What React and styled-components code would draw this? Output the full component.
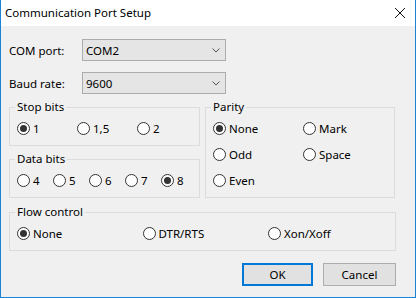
import React from "react";
import styled, { createGlobalStyle } from "styled-components";

const Global = createGlobalStyle`
  html, body { margin: 0; padding: 0; background: #f0f0f0; }
  body { font-family: "Noto Sans", "Segoe UI", sans-serif; font-size: 11.5px; color: #000; }
  * { box-sizing: border-box; }
`;

const Window = styled.div`
  width: 416px;
  height: 298px;
  display: flex;
  flex-direction: column;
  background: #f0f0f0;
  border: 1px solid #1883d7;
  border-top: none;
`;

const TitleBar = styled.div`
  height: 26px;
  background: #fff;
  display: flex;
  align-items: center;
  justify-content: space-between;
  padding: 0 10px 0 4px;
  font-size: 11.5px;
`;

const Title = styled.span`
  line-height: 16px;
`;

const Body = styled.div`
  flex: 1;
  display: flex;
  flex-direction: column;
  padding: 13px 19px 0 8px;
`;

const FieldRow = styled.div`
  display: flex;
  align-items: center;
  height: 22px;
  margin-bottom: ${(p) => p.$mb || 0}px;
`;

const FieldLabel = styled.label`
  width: 73px;
`;

const Combo = styled.div`
  width: 144px;
  height: 22px;
  background: #e5e5e5;
  border: 1px solid #acacac;
  display: flex;
  align-items: center;
  justify-content: space-between;
  padding: 0 5px 0 3px;
`;

const Group = styled.div`
  position: relative;
  border: 1px solid #dcdcdc;
  height: ${(p) => p.$h}px;
  padding: 12px 0 0 7px;
`;

const Legend = styled.span`
  position: absolute;
  top: -9px;
  left: 5px;
  padding: 0 2px;
  background: #f0f0f0;
  line-height: 16px;
`;

const GroupsRow = styled.div`
  display: grid;
  grid-template-columns: 191px 190px;
  column-gap: 5px;
  margin-top: 13px;
`;

const Column = styled.div`
  display: flex;
  flex-direction: column;
  gap: 13px;
`;

const Options = styled.div`
  display: grid;
  grid-template-columns: repeat(${(p) => p.$cols}, ${(p) => p.$w}px);
  row-gap: 10px;
`;

const RadioItem = styled.label`
  display: flex;
  align-items: center;
  height: 16px;
  gap: 3px;
  white-space: nowrap;
`;

const Circle = styled.span`
  width: 13px;
  height: 13px;
  border-radius: 50%;
  border: 1px solid #333;
  background: #fff;
  display: flex;
  align-items: center;
  justify-content: center;
  &::after {
    content: "";
    width: 7px;
    height: 7px;
    border-radius: 50%;
    background: ${(p) => (p.$on ? "#333" : "transparent")};
  }
`;

const FlowWrap = styled.div`
  margin-top: 14px;
`;

const Buttons = styled.div`
  display: flex;
  justify-content: flex-end;
  gap: 10px;
  margin-top: 12px;
`;

const Button = styled.button`
  font: inherit;
  color: #000;
  width: ${(p) => p.$w}px;
  height: 23px;
  background: #e1e1e1;
  border: ${(p) => (p.$default ? "2px solid #0078d7" : "1px solid #adadad")};
  padding: 0;
`;

const Radio = ({ on, children }) => (
  <RadioItem>
    <Circle $on={on} />
    {children}
  </RadioItem>
);

const Chevron = () => (
  <svg width="8" height="5" viewBox="0 0 8 5">
    <path d="M0.5 0.5 L4 4 L7.5 0.5" fill="none" stroke="#555" strokeWidth="1" />
  </svg>
);

const CloseX = () => (
  <svg width="10" height="10" viewBox="0 0 10 10">
    <path d="M0 0 L10 10 M10 0 L0 10" stroke="#111" strokeWidth="1" />
  </svg>
);

export default function App() {
  return (
    <>
      <Global />
      <Window>
        <TitleBar>
          <Title>Communication Port Setup</Title>
          <CloseX />
        </TitleBar>
        <Body>
          <FieldRow $mb={11}>
            <FieldLabel>COM port:</FieldLabel>
            <Combo>
              <span>COM2</span>
              <Chevron />
            </Combo>
          </FieldRow>
          <FieldRow>
            <FieldLabel>Baud rate:</FieldLabel>
            <Combo>
              <span>9600</span>
              <Chevron />
            </Combo>
          </FieldRow>
          <GroupsRow>
            <Column>
              <Group $h={39}>
                <Legend>Stop bits</Legend>
                <Options $cols={3} $w={60}>
                  <Radio on>1</Radio>
                  <Radio>1,5</Radio>
                  <Radio>2</Radio>
                </Options>
              </Group>
              <Group $h={39}>
                <Legend>Data bits</Legend>
                <Options $cols={5} $w={36}>
                  <Radio>4</Radio>
                  <Radio>5</Radio>
                  <Radio>6</Radio>
                  <Radio>7</Radio>
                  <Radio on>8</Radio>
                </Options>
              </Group>
            </Column>
            <Group $h={91}>
              <Legend>Parity</Legend>
              <Options $cols={2} $w={90}>
                <Radio on>None</Radio>
                <Radio>Mark</Radio>
                <Radio>Odd</Radio>
                <Radio>Space</Radio>
                <Radio>Even</Radio>
              </Options>
            </Group>
          </GroupsRow>
          <FlowWrap>
            <Group $h={39}>
              <Legend>Flow control</Legend>
              <Options $cols={3} $w={125.5}>
                <Radio on>None</Radio>
                <Radio>DTR/RTS</Radio>
                <Radio>Xon/Xoff</Radio>
              </Options>
            </Group>
          </FlowWrap>
          <Buttons>
            <Button $default $w={71}>OK</Button>
            <Button $w={73}>Cancel</Button>
          </Buttons>
        </Body>
      </Window>
    </>
  );
}
